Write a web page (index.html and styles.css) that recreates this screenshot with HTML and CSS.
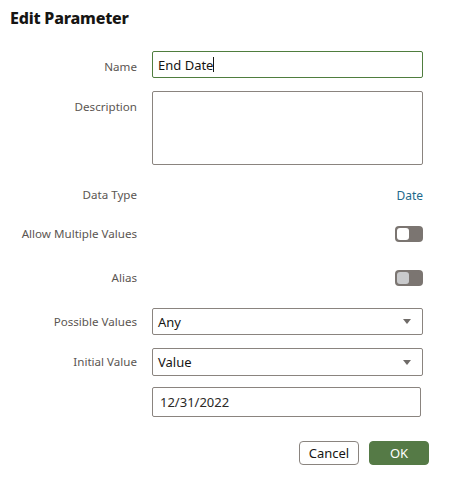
FILE: index.html
```html
<!DOCTYPE html>
<html lang="en">
<head>
    <meta charset="UTF-8">
    <meta name="viewport" content="width=device-width, initial-scale=1.0">
    <title>Edit Parameter</title>
    <link rel="stylesheet" href="styles.css">
</head>
<body>
    <div class="dialog">
        <h1 class="dialog-title">Edit Parameter</h1>
        <form class="param-form">
            <div class="row row-top row-name">
                <label class="row-label" for="name">Name</label>
                <div class="text-field focused"><span id="name">End Date</span><span class="caret"></span></div>
            </div>

            <div class="row row-top row-desc">
                <label class="row-label" for="description">Description</label>
                <textarea id="description" class="text-area"></textarea>
            </div>

            <div class="row row-plain row-type">
                <span class="row-label">Data Type</span>
                <span class="type-value">Date</span>
            </div>

            <div class="row row-plain row-multi">
                <span class="row-label">Allow Multiple Values</span>
                <span class="switch"><span class="knob"></span></span>
            </div>

            <div class="row row-plain row-alias">
                <span class="row-label">Alias</span>
                <span class="switch"><span class="knob knob-disabled"></span></span>
            </div>

            <div class="row row-possible">
                <span class="row-label">Possible Values</span>
                <div class="select-field"><span>Any</span><span class="arrow"></span></div>
            </div>

            <div class="row row-initial">
                <span class="row-label">Initial Value</span>
                <div class="select-field"><span>Value</span><span class="arrow"></span></div>
            </div>

            <div class="row row-date">
                <span class="row-label"></span>
                <div class="date-field">12/31/2022</div>
            </div>

            <div class="actions">
                <button type="button" class="btn btn-cancel">Cancel</button>
                <button type="button" class="btn btn-ok">OK</button>
            </div>
        </form>
    </div>
</body>
</html>
```

FILE: styles.css
```css
/* Edit parameter dialog */
body {
    margin: 0;
    background: #ffffff;
    font-family: 'Noto Sans', 'Open Sans', sans-serif;
    color: #161513;
}

.dialog {
    width: 449px;
    height: 484px;
    box-sizing: border-box;
    padding: 7px 0 0 0;
}

.dialog-title {
    margin: 0 0 0 10px;
    font-size: 16px;
    line-height: 22px;
    font-weight: 800;
    letter-spacing: -0.2px;
    color: #161513;
}

.param-form {
    margin-top: 22px;
}

.row {
    display: flex;
    align-items: center;
}

.row-top {
    align-items: flex-start;
}

.row-label {
    width: 137px;
    flex: none;
    margin-right: 15px;
    text-align: right;
    font-size: 11.6px;
    line-height: 16px;
    color: #5b5652;
}

.row-top .row-label {
    padding-top: 8px;
}

/* row heights and spacing */
.row-name { height: 27px; }
.row-desc { height: 74px; margin-top: 13px; }
.row-type { height: 24px; margin-top: 18px; }
.row-multi { height: 24px; margin-top: 15px; }
.row-alias { height: 24px; margin-top: 20px; }
.row-possible { height: 27px; margin-top: 18px; }
.row-initial { height: 28px; margin-top: 13px; }
.row-date { height: 30px; margin-top: 11px; }

.text-field,
.select-field,
.date-field {
    width: 271px;
    height: 100%;
    box-sizing: border-box;
    border: 1px solid #8a847f;
    border-radius: 2px;
    display: flex;
    align-items: center;
    padding: 0 5px;
    font-size: 13px;
}

.text-field.focused {
    border-color: #4f7d3e;
}

.caret {
    display: inline-block;
    width: 1px;
    height: 15px;
    background: #161513;
}

.text-area {
    width: 271px;
    height: 74px;
    box-sizing: border-box;
    border: 1px solid #8a847f;
    border-radius: 2px;
    resize: none;
    margin: 0;
    font-family: inherit;
}

.type-value {
    width: 271px;
    text-align: right;
    font-size: 12px;
    color: #1d6a8c;
}

.switch {
    margin-left: auto;
    margin-right: 26px;
    width: 28px;
    height: 16px;
    box-sizing: border-box;
    border-radius: 4px;
    background: #7b7571;
    padding: 2px 0 0 2px;
}

.knob {
    display: block;
    width: 12px;
    height: 12px;
    border-radius: 3px;
    background: #ffffff;
}

.knob-disabled {
    background: #c9cacc;
}

.select-field {
    justify-content: space-between;
}

.arrow {
    width: 0;
    height: 0;
    border-left: 4px solid transparent;
    border-right: 4px solid transparent;
    border-top: 5px solid #6f6b68;
    margin-right: 6px;
}

.date-field {
    width: 269px;
    padding-left: 7px;
    font-size: 13px;
    color: #2b2927;
}

.actions {
    display: flex;
    justify-content: flex-end;
    gap: 10px;
    margin-top: 24px;
    margin-right: 20px;
}

.btn {
    width: 60px;
    height: 24px;
    border-radius: 4px;
    font-family: inherit;
    font-size: 13px;
    padding: 0;
    cursor: pointer;
}

.btn-cancel {
    background: #ffffff;
    border: 1px solid #8a847f;
    color: #161513;
}

.btn-ok {
    background: #557a46;
    border: 1px solid #557a46;
    color: #ffffff;
}
```
